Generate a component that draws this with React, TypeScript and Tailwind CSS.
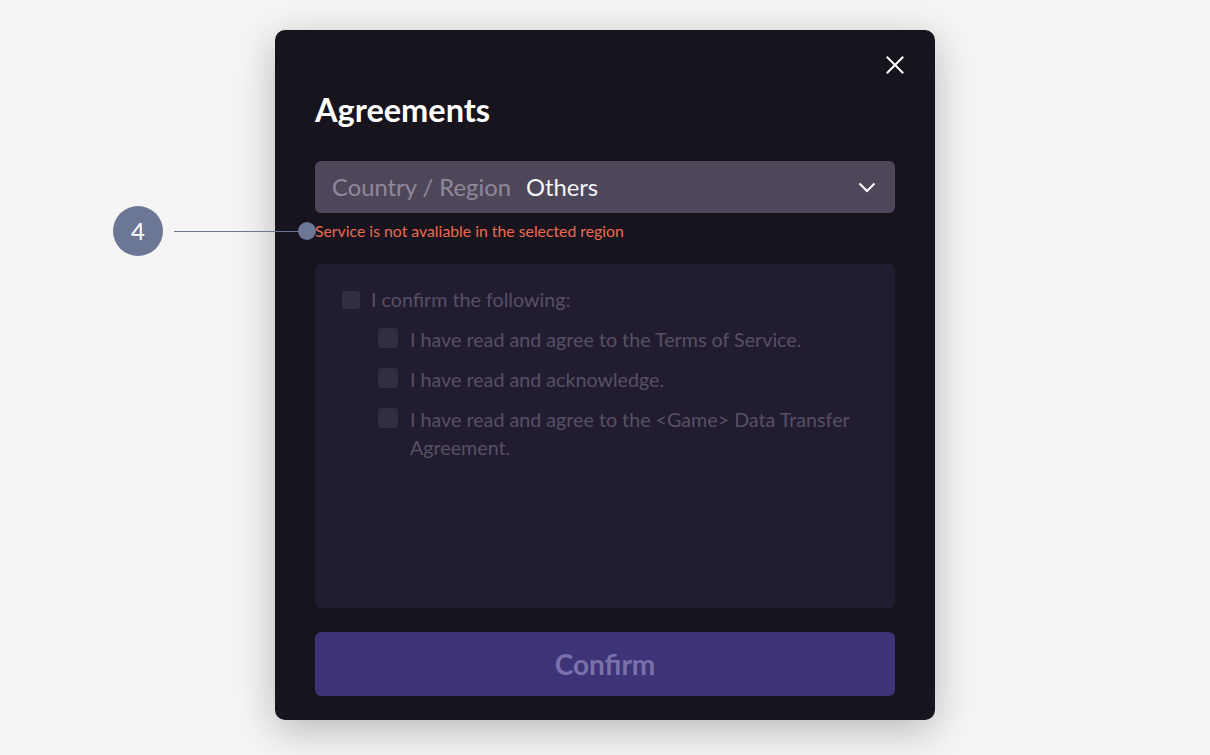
const items = [
  'I have read and agree to the Terms of Service.',
  'I have read and acknowledge.',
  'I have read and agree to the <Game> Data Transfer Agreement.',
]

export default function App() {
  return (
    <div
      className="relative min-h-[755px] w-full bg-[#f5f5f5] flex justify-center pt-[30px]"
      style={{ fontFamily: 'Lato, "Open Sans", sans-serif' }}
    >
      {/* Modal */}
      <div className="relative w-[660px] h-[690px] bg-[#17141e] rounded-[10px] shadow-[0_10px_40px_rgba(0,0,0,0.25)] px-10 pt-[62px] pb-6 flex flex-col">
        <button className="absolute top-[26px] right-[31px] text-white" aria-label="Close">
          <svg width="18" height="18" viewBox="0 0 18 18" fill="none" stroke="currentColor" strokeWidth="2" strokeLinecap="square">
            <path d="M1.5 1.5L16.5 16.5M16.5 1.5L1.5 16.5" />
          </svg>
        </button>

        <h2 className="text-[32.5px] leading-[36px] font-bold text-white">Agreements</h2>

        {/* Country select */}
        <div className="mt-[33px] h-[52px] rounded-md bg-[#4e4759] flex items-center pl-[17px] pr-[19px] pt-[2px]">
          <span className="text-[23.8px] text-[#8f899b]">Country / Region</span>
          <span className="ml-[15px] text-[23.8px] text-[#f4f3f6]">Others</span>
          <svg width="18" height="11" viewBox="0 0 18 11" fill="none" stroke="white" strokeWidth="2" className="ml-auto -mt-[2px]">
            <path d="M1.5 1.5L9 9L16.5 1.5" />
          </svg>
        </div>

        <p className="mt-2 text-[15.8px] leading-5 text-[#ec6a52]">
          Service is not avaliable in the selected region
        </p>

        {/* Agreements panel */}
        <div className="mt-[23px] h-[344px] rounded-md bg-[#221c31] pl-[27px] pr-6 pt-[22px]">
          <div className="flex items-center gap-[11px]">
            <span className="w-[18px] h-[18px] rounded-[3px] bg-[#332d40] flex-shrink-0" />
            <span className="text-[19.7px] leading-7 text-[#575064]">I confirm the following:</span>
          </div>
          <div className="ml-9 mt-3 flex flex-col gap-3">
            {items.map(t => (
              <div key={t} className="flex items-start gap-3">
                <span className="mt-[2px] w-5 h-5 rounded-[4px] bg-[#332d40] flex-shrink-0" />
                <span className="text-[19.7px] leading-7 text-[#575064]">{t}</span>
              </div>
            ))}
          </div>
        </div>

        <button className="mt-6 h-16 rounded-md bg-[#3c3476] text-[28px] font-bold text-[#7a70ab]">
          Confirm
        </button>
      </div>

      {/* Annotation */}
      <div className="absolute left-[113px] top-[206px] w-[50px] h-[50px] rounded-full bg-[#6c7796] flex items-center justify-center text-white text-[24px]">
        4
      </div>
      <div className="absolute left-[174px] top-[231px] w-[130px] h-px bg-[#6c7796]" />
      <div className="absolute left-[298px] top-[222px] w-[18px] h-[18px] rounded-full bg-[#6c7796]" />
    </div>
  )
}
